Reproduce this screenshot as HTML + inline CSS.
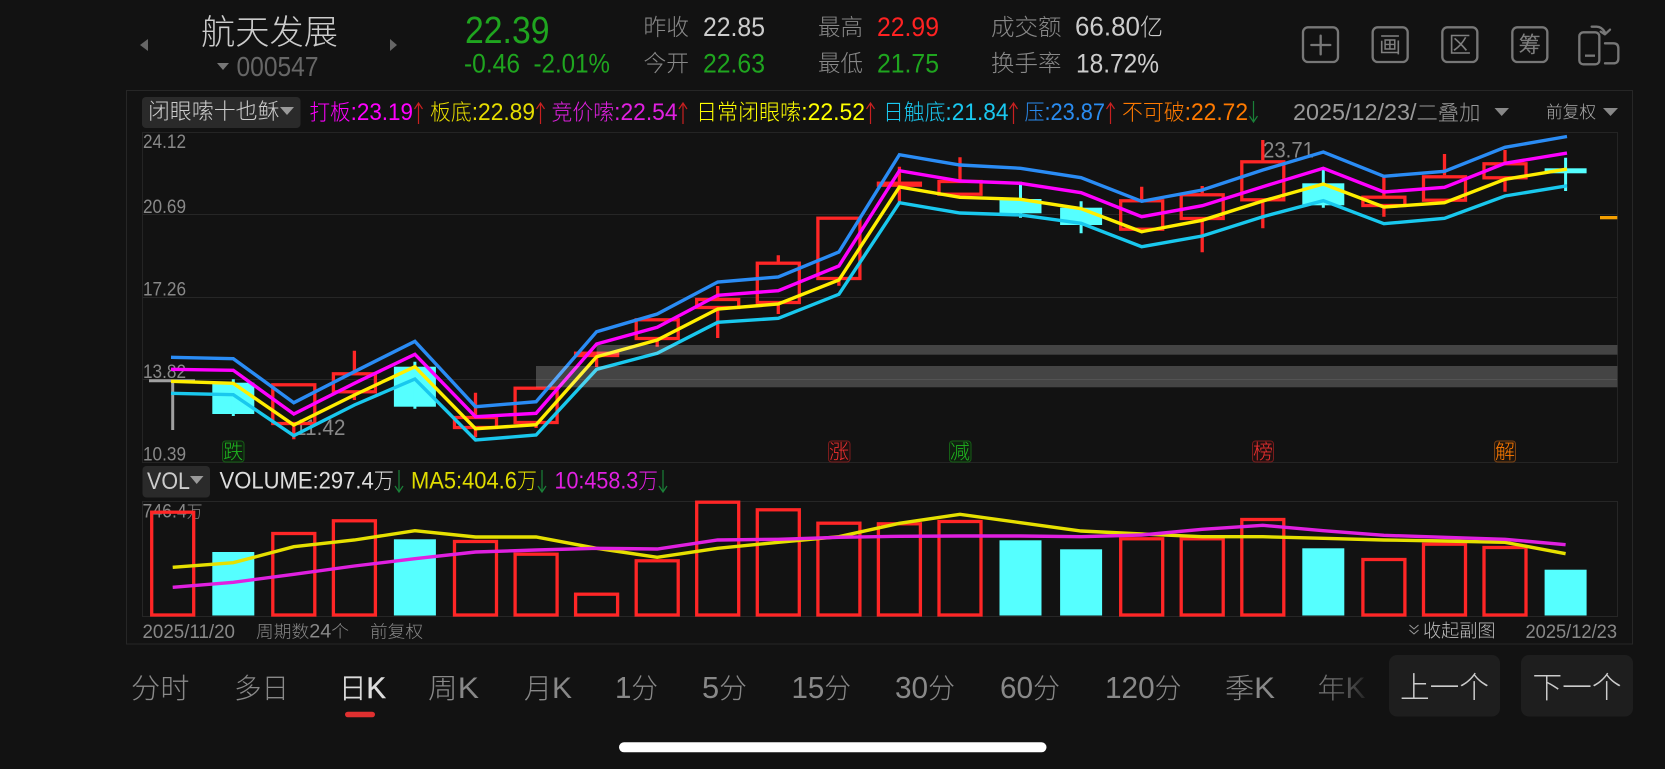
<!DOCTYPE html>
<html lang="zh"><head><meta charset="utf-8"><title>航天发展</title>
<style>
html,body{margin:0;padding:0;background:#121212;width:1665px;height:769px;overflow:hidden}
svg{display:block;position:absolute;left:0;top:0}
text{font-family:"Liberation Sans","Noto Sans CJK SC",sans-serif;font-weight:300;white-space:pre}
.g{fill:#888}.w{fill:#ccc}.gr{fill:#1fa51f}.r{fill:#f22}
.c{fill:none;stroke:#ff2626;stroke-width:3.3}
.wk{fill:none;stroke:#ff2626;stroke-width:3.3}
.wc{fill:none;stroke:#55ffff;stroke-width:3}
.l{fill:none;stroke-width:3.4}
.tab{font-size:28px;fill:#888}
.ic{fill:none;stroke:#777;stroke-width:7}
.icg{font-size:22px;fill:#808080;stroke:#808080;stroke-width:.5;text-anchor:middle}
</style></head><body>
<svg width="1665" height="769" viewBox="0 0 1665 769" xmlns="http://www.w3.org/2000/svg">
<defs><linearGradient id="fd" gradientUnits="userSpaceOnUse" x1="1317" y1="0" x2="1366" y2="0"><stop offset="0" stop-color="#777"/><stop offset=".5" stop-color="#666"/><stop offset="1" stop-color="#222"/></linearGradient></defs>
<rect width="1665" height="769" fill="#121212"/>

<!-- header -->
<polygon points="148,39 148,51 140,45" fill="#666"/>
<polygon points="390,39 390,51 397,45" fill="#666"/>
<text x="201" y="44" font-size="34" fill="#ccc" textLength="137" lengthAdjust="spacingAndGlyphs">航天发展</text>
<polygon points="217,63 229,63 223,70" fill="#777"/>
<text x="236.5" y="76" font-size="27.5" fill="#666" textLength="82" lengthAdjust="spacingAndGlyphs">000547</text>
<text x="465" y="43" font-size="38" class="gr" textLength="84.5" lengthAdjust="spacingAndGlyphs">22.39</text>
<text x="464" y="72.5" font-size="27" class="gr" textLength="56" lengthAdjust="spacingAndGlyphs">-0.46</text>
<text x="533.5" y="72.5" font-size="27" class="gr" textLength="76.5" lengthAdjust="spacingAndGlyphs">-2.01%</text>
<text x="643.5" y="35" font-size="23" class="g" textLength="45.5" lengthAdjust="spacingAndGlyphs">昨收</text>
<text x="643.5" y="71" font-size="23" class="g" textLength="45.5" lengthAdjust="spacingAndGlyphs">今开</text>
<text x="703" y="36" font-size="27" class="w" textLength="62" lengthAdjust="spacingAndGlyphs">22.85</text>
<text x="703" y="72.5" font-size="27" class="gr" textLength="62" lengthAdjust="spacingAndGlyphs">22.63</text>
<text x="818" y="35" font-size="23" class="g" textLength="45" lengthAdjust="spacingAndGlyphs">最高</text>
<text x="818" y="71" font-size="23" class="g" textLength="45" lengthAdjust="spacingAndGlyphs">最低</text>
<text x="877" y="36" font-size="27" class="r" textLength="62" lengthAdjust="spacingAndGlyphs">22.99</text>
<text x="877" y="72.5" font-size="27" class="gr" textLength="62" lengthAdjust="spacingAndGlyphs">21.75</text>
<text x="991" y="35" font-size="23" class="g" textLength="70.5" lengthAdjust="spacingAndGlyphs">成交额</text>
<text x="991" y="71" font-size="23" class="g" textLength="70.5" lengthAdjust="spacingAndGlyphs">换手率</text>
<text x="1075" y="35.5" font-size="27" class="w" textLength="88" lengthAdjust="spacingAndGlyphs">66.80<tspan font-size="24">亿</tspan></text>
<text x="1076" y="72.5" font-size="27" class="w" textLength="83" lengthAdjust="spacingAndGlyphs">18.72%</text>

<!-- icons -->
<g transform="translate(1290,15) scale(.33333)">
<rect class="ic" x="39" y="37" width="105" height="104" rx="15"/>
<path class="ic" d="M64 90H121M92 62V118" stroke-linecap="round" stroke-width="8"/>
<rect class="ic" x="248" y="37" width="105" height="104" rx="15"/>
<rect class="ic" x="457" y="37" width="105" height="104" rx="15"/>
<rect class="ic" x="667" y="37" width="105" height="104" rx="15"/>
<rect class="ic" x="868" y="52" width="60" height="96" rx="12"/>
<path class="ic" d="M885 122H915"/>
<path class="ic" d="M905 35H920Q935 35 945 52M960 44L945 58L932 50" stroke-linejoin="round" stroke-linecap="round"/>
<path class="ic" d="M945 85H970Q985 85 985 100V130Q985 145 970 145H945" stroke-linecap="round"/>
</g>
<text class="icg" x="1390" y="52.5">画</text><text class="icg" x="1459.7" y="52.5">区</text><text class="icg" x="1529.7" y="52.5">筹</text>

<!-- panel -->
<rect x="126.5" y="90.5" width="1506" height="553.5" fill="none" stroke="#262626"/>
<rect x="142.5" y="132.5" width="1475" height="330" fill="none" stroke="#242424"/>
<path d="M142.5 214.5H1617.5M142.5 297.5H1617.5M142.5 379.5H1617.5" stroke="#262626" fill="none"/>
<rect x="142.5" y="501.5" width="1475" height="115" fill="none" stroke="#262626"/>

<!-- legend -->
<rect x="142" y="97" width="158.5" height="31" rx="4" fill="#2a2a2a"/>
<text x="148" y="119" font-size="22" fill="#ccc" textLength="131.5" lengthAdjust="spacingAndGlyphs">闭眼嗦十也稣</text>
<polygon points="280,107 294,107 287,115" fill="#999"/>
<g font-size="22">
<text x="309.5" y="120" fill="#ff00ff" textLength="103.5" lengthAdjust="spacingAndGlyphs">打板<tspan font-size="24">:23.19</tspan></text>
<text x="430" y="120" fill="#e6dc00" textLength="105" lengthAdjust="spacingAndGlyphs">板底<tspan font-size="24">:22.89</tspan></text>
<text x="551.5" y="120" fill="#e020e0" textLength="126" lengthAdjust="spacingAndGlyphs">竞价嗦<tspan font-size="24">:22.54</tspan></text>
<text x="696" y="120" fill="#ffff00" textLength="169" lengthAdjust="spacingAndGlyphs">日常闭眼嗦<tspan font-size="24">:22.52</tspan></text>
<text x="883" y="120" fill="#1ac8f0" textLength="125.5" lengthAdjust="spacingAndGlyphs">日触底<tspan font-size="24">:21.84</tspan></text>
<text x="1024.5" y="120" fill="#2a8cf0" textLength="80.5" lengthAdjust="spacingAndGlyphs">压<tspan font-size="24">:23.87</tspan></text>
<text x="1122" y="120" fill="#ff7a00" textLength="126" lengthAdjust="spacingAndGlyphs">不可破<tspan font-size="24">:22.72</tspan></text>
</g>
<g fill="none" stroke-width="1.2">
<path stroke="#c82020" d="M418.5 124V103M414.5 109L418.5 103L422.5 109M540.5 124V103M536.5 109L540.5 103L544.5 109M683 124V103M679 109L683 103L687 109M870.5 124V103M866.5 109L870.5 103L874.5 109M1013.5 124V103M1009.5 109L1013.5 103L1017.5 109M1110.5 124V103M1106.5 109L1110.5 103L1114.5 109"/>
<path stroke="#1a8038" d="M1253.5 101V122M1249.5 116L1253.5 122L1257.5 116"/>
</g>
<text x="1293" y="120" font-size="21" fill="#999" textLength="187.5" lengthAdjust="spacingAndGlyphs"><tspan font-size="23">2025/12/23/</tspan>二叠加</text>
<polygon points="1494.5,108 1509,108 1501.7,116" fill="#888"/>
<text x="1546" y="118" font-size="17" fill="#aaa" textLength="50" lengthAdjust="spacingAndGlyphs">前复权</text>
<polygon points="1603,108 1618,108 1610.5,116" fill="#888"/>

<!-- axis labels -->
<g font-size="19" class="g">
<text x="143" y="148" textLength="43" lengthAdjust="spacingAndGlyphs">24.12</text>
<text x="143" y="213" textLength="43" lengthAdjust="spacingAndGlyphs">20.69</text>
<text x="143" y="295.5" textLength="43" lengthAdjust="spacingAndGlyphs">17.26</text>
<text x="143" y="378" textLength="43" lengthAdjust="spacingAndGlyphs">13.82</text>
<text x="143" y="460.5" textLength="43" lengthAdjust="spacingAndGlyphs">10.39</text>
</g>
<text x="295" y="435" font-size="22" fill="#888" textLength="50.5" lengthAdjust="spacingAndGlyphs">11.42</text>
<text x="1263" y="157.5" font-size="22" fill="#888" textLength="51" lengthAdjust="spacingAndGlyphs">23.71</text>

<!-- gray T -->
<path d="M149 380.8H195M172.7 380.8V430" stroke="#a0a0a0" stroke-width="3" fill="none"/>

<!-- candles red -->
<g>
<rect class="c" x="272.8" y="384.8" width="42" height="38.7"/>
<rect class="c" x="333.4" y="373.8" width="42" height="18"/>
<rect class="c" x="454.5" y="417.5" width="42" height="10"/>
<rect class="c" x="515.1" y="388.2" width="42" height="34.3"/>
<rect class="c" x="575.6" y="353.2" width="42" height="2.3"/>
<rect class="c" x="636.2" y="319.8" width="42" height="18.7"/>
<rect class="c" x="696.7" y="299.5" width="42" height="8"/>
<rect class="c" x="757.3" y="263.2" width="42" height="39.3"/>
<rect class="c" x="817.9" y="218.2" width="42" height="60.3"/>
<rect class="c" x="878.4" y="183.2" width="42" height="2"/>
<rect class="c" x="939" y="181.5" width="42" height="12.7"/>
<rect class="c" x="1120.7" y="200.8" width="42" height="28.4"/>
<rect class="c" x="1181.2" y="194.8" width="42" height="23.7"/>
<rect class="c" x="1241.8" y="161.8" width="42" height="38"/>
<rect class="c" x="1362.9" y="197.2" width="42" height="8.3"/>
<rect class="c" x="1423.5" y="176.8" width="42" height="23.4"/>
<rect class="c" x="1484" y="163.8" width="42" height="14"/>
<path class="wk" d="M293.8 425V439.3M354.4 350.7V372.3M354.4 393.3V400M475.5 392.7V416M475.5 429V437.3M536.1 424V428M596.6 357V367M657.2 340V346.7M717.7 286V298M717.7 309V338M778.3 255.3V261.7M778.3 304V314M838.9 280V285.7M899.4 166.7V181.7M899.4 186.7V201.7M960 157.3V180M1141.7 186.7V199.3M1202.2 186V193.3M1202.2 220V252.3M1262.8 140V160.3M1262.8 201.3V228.3M1383.9 176.7V195.7M1383.9 207V216.7M1444.5 154V175.3M1505 150V162.3M1505 179.3V191.7"/>
</g>
<!-- candles cyan -->
<g fill="#55ffff">
<rect x="212.3" y="382.7" width="42" height="31.3"/>
<rect x="393.9" y="366.7" width="42" height="40"/>
<rect x="999.5" y="199" width="42" height="14.3"/>
<rect x="1060.1" y="207.7" width="42" height="17.3"/>
<rect x="1302.3" y="183.3" width="42" height="22"/>
<rect x="1544.6" y="168.3" width="42" height="5"/>
</g>
<path class="wc" d="M233.3 379.3V416M414.9 361.7V408.7M1020.5 181.7V217.7M1081.1 201.3V233.3M1323.3 170V207.7M1565.6 157.7V191"/>

<!-- main lines -->
<polyline class="l" stroke="#2a8cf5" points="171,357.3 233.3,358.7 293.8,402.7 354.4,371.7 414.9,341.3 475.5,406.7 536.1,401.7 596.6,331.7 657.2,314 717.7,282 778.3,277 838.9,252 899.4,154.7 960,165 1020.5,168.3 1081.1,177.7 1141.7,201.3 1202.2,190 1262.8,170 1323.3,152 1383.9,176.3 1444.5,171.3 1505,147.3 1567,136.5"/>
<polyline class="l" stroke="#ff00ff" points="171,369.3 233.3,370.3 293.8,414 354.4,383.3 414.9,354.3 475.5,416.7 536.1,413.3 596.6,344 657.2,327.3 717.7,295.3 778.3,290.7 838.9,266 899.4,170.7 960,181 1020.5,183.3 1081.1,192.7 1141.7,216.7 1202.2,205.7 1262.8,186.7 1323.3,168.3 1383.9,192 1444.5,187.3 1505,163.3 1567,153.1"/>
<polyline class="l" stroke="#19c8ee" points="171,393.3 233.3,394.7 293.8,435.7 354.4,405 414.9,379 475.5,440 536.1,435 596.6,369.3 657.2,353.3 717.7,322.3 778.3,318.3 838.9,294.3 899.4,202.7 960,213 1020.5,215 1081.1,223.3 1141.7,246.7 1202.2,236 1262.8,216.7 1323.3,200.7 1383.9,223.7 1444.5,218.3 1505,196 1567,185.8"/>
<polyline class="l" stroke="#ffee00" points="171,381.3 233.3,383.3 293.8,425 354.4,395 414.9,366.7 475.5,428.7 536.1,424.7 596.6,356.7 657.2,340 717.7,309 778.3,304 838.9,280 899.4,187 960,197.3 1020.5,199.3 1081.1,208.7 1141.7,231.7 1202.2,220.3 1262.8,201 1323.3,184 1383.9,207 1444.5,202.7 1505,179.3 1567,169.1"/>

<!-- gray bands -->
<rect x="596.6" y="345" width="1020.7" height="9.7" fill="#fff" fill-opacity=".21"/>
<rect x="536" y="366" width="1081.3" height="21.3" fill="#fff" fill-opacity=".21"/>
<!-- orange dash -->
<rect x="1600" y="216" width="17.3" height="3.3" fill="#f5a000"/>

<!-- signal tags -->
<g font-size="20" text-anchor="middle">
<rect x="222.5" y="441" width="21.5" height="21" rx="3" fill="#0e2a0e" fill-opacity=".5" stroke="#155f15"/><text x="233.3" y="458.5" fill="#1fb51f">跌</text>
<rect x="828.5" y="441" width="21.5" height="21" rx="3" fill="#2a0e0e" fill-opacity=".5" stroke="#7a1c1c"/><text x="839" y="458.5" fill="#f03030">涨</text>
<rect x="949.5" y="441" width="21.5" height="21" rx="3" fill="#0e2a0e" fill-opacity=".5" stroke="#155f15"/><text x="960" y="458.5" fill="#1fb51f">减</text>
<rect x="1252.5" y="441" width="21" height="21" rx="3" fill="#2a0e0e" fill-opacity=".5" stroke="#7a1c1c"/><text x="1263" y="458.5" fill="#f03030">榜</text>
<rect x="1494.5" y="441" width="21" height="21" rx="3" fill="#2a180a" fill-opacity=".5" stroke="#7a4212"/><text x="1505" y="458.5" fill="#ff7a00">解</text>
</g>

<!-- VOL legend -->
<rect x="142.5" y="466" width="67.5" height="31.5" rx="4" fill="#2a2a2a"/>
<text x="147" y="489" font-size="24" fill="#ccc" textLength="43" lengthAdjust="spacingAndGlyphs">VOL</text>
<polygon points="190,476 203.5,476 196.7,484" fill="#999"/>
<g font-size="24">
<text x="219.5" y="488.5" fill="#ddd" textLength="174.5" lengthAdjust="spacingAndGlyphs">VOLUME:297.4<tspan font-size="22">万</tspan></text>
<text x="411" y="488.5" fill="#e0dc00" textLength="126" lengthAdjust="spacingAndGlyphs">MA5:404.6<tspan font-size="22">万</tspan></text>
<text x="554.5" y="488.5" fill="#e020e0" textLength="103.5" lengthAdjust="spacingAndGlyphs">10:458.3<tspan font-size="22">万</tspan></text>
</g>
<path d="M399 470V492M395 486L399 492L403 486M542 470V492M538 486L542 492L546 486M663 470V492M659 486L663 492L667 486" stroke="#1a8038" stroke-width="1.2" fill="none"/>
<text x="142.5" y="517.5" font-size="19" fill="#888" textLength="60" lengthAdjust="spacingAndGlyphs">746.4<tspan font-size="17">万</tspan></text>

<!-- volume bars -->
<g>
<rect class="c" x="151.7" y="512.2" width="42" height="102.8"/>
<rect class="c" x="272.8" y="533.5" width="42" height="81.5"/>
<rect class="c" x="333.4" y="520.8" width="42" height="94.2"/>
<rect class="c" x="454.5" y="541.5" width="42" height="73.5"/>
<rect class="c" x="515.1" y="554.2" width="42" height="60.8"/>
<rect class="c" x="575.6" y="594.2" width="42" height="20.8"/>
<rect class="c" x="636.2" y="560.8" width="42" height="54.2"/>
<rect class="c" x="696.7" y="502.2" width="42" height="112.8"/>
<rect class="c" x="757.3" y="509.8" width="42" height="105.2"/>
<rect class="c" x="817.9" y="523.2" width="42" height="91.8"/>
<rect class="c" x="878.4" y="523.8" width="42" height="91.2"/>
<rect class="c" x="939" y="521.5" width="42" height="93.5"/>
<rect class="c" x="1120.7" y="538.8" width="42" height="76.2"/>
<rect class="c" x="1181.2" y="538.8" width="42" height="76.2"/>
<rect class="c" x="1241.8" y="519.5" width="42" height="95.5"/>
<rect class="c" x="1362.9" y="559.5" width="42" height="55.5"/>
<rect class="c" x="1423.5" y="544.2" width="42" height="70.8"/>
<rect class="c" x="1484" y="547.5" width="42" height="67.5"/>
</g>
<g fill="#55ffff">
<rect x="212.3" y="552" width="42" height="63.5"/>
<rect x="393.9" y="539.3" width="42" height="76.2"/>
<rect x="999.5" y="540.3" width="42" height="75.2"/>
<rect x="1060.1" y="549.3" width="42" height="66.2"/>
<rect x="1302.3" y="548.3" width="42" height="67.2"/>
<rect x="1544.6" y="569.7" width="42" height="45.8"/>
</g>
<polyline class="l" stroke="#e6e000" points="172.7,567.3 233.3,562.7 293.8,546.7 354.4,540 414.9,530.7 475.5,537 536.1,537 596.6,548.3 657.2,557.3 717.7,548.3 778.3,542.3 838.9,536.7 899.4,523.3 960,514.3 1020.5,522.7 1081.1,531 1141.7,534 1202.2,536.7 1262.8,536.7 1323.3,538.3 1383.9,540 1444.5,541 1505,542.3 1565.6,553.7"/>
<polyline class="l" stroke="#e020e0" points="172.7,587.3 233.3,582.3 293.8,574.3 354.4,566 414.9,558.7 475.5,552 536.1,550 596.6,548.3 657.2,549 717.7,540 778.3,539.3 838.9,537.3 899.4,536.3 960,536 1020.5,536 1081.1,536.7 1141.7,535 1202.2,529.3 1262.8,525.3 1323.3,530.7 1383.9,535.3 1444.5,537.3 1505,539.3 1565.6,544.7"/>

<!-- bottom labels -->
<g font-size="17" class="g">
<text x="142.5" y="638" font-size="19" textLength="92.5" lengthAdjust="spacingAndGlyphs">2025/11/20</text>
<text x="256" y="637.5" textLength="93" lengthAdjust="spacingAndGlyphs">周期数<tspan font-size="19">24</tspan>个</text>
<text x="370" y="637.5" textLength="53" lengthAdjust="spacingAndGlyphs">前复权</text>
<text x="1525.5" y="638" font-size="19" textLength="91.5" lengthAdjust="spacingAndGlyphs">2025/12/23</text>
</g>
<path d="M1409.5 625L1414 629L1418.5 625M1409.5 630L1414 634L1418.5 630" stroke="#999" fill="none" stroke-width="1"/>
<text x="1423" y="637" font-size="18" fill="#bbb" textLength="72.5" lengthAdjust="spacingAndGlyphs">收起副图</text>

<!-- tabs -->
<g>
<text class="tab" x="131" y="698" textLength="58.5" lengthAdjust="spacingAndGlyphs">分时</text>
<text class="tab" x="234" y="698" textLength="55" lengthAdjust="spacingAndGlyphs">多日</text>
<text class="tab" x="339" y="698" textLength="47" lengthAdjust="spacingAndGlyphs" style="fill:#ddd;stroke:#ddd;stroke-width:.4">日<tspan font-size="30">K</tspan></text>
<text class="tab" x="428" y="698" textLength="51" lengthAdjust="spacingAndGlyphs">周<tspan font-size="30">K</tspan></text>
<text class="tab" x="524" y="698" textLength="48" lengthAdjust="spacingAndGlyphs">月<tspan font-size="30">K</tspan></text>
<text class="tab" x="615" y="698" textLength="43" lengthAdjust="spacingAndGlyphs"><tspan font-size="31">1</tspan>分</text>
<text class="tab" x="702" y="698" textLength="45" lengthAdjust="spacingAndGlyphs"><tspan font-size="31">5</tspan>分</text>
<text class="tab" x="791.5" y="698" textLength="59.5" lengthAdjust="spacingAndGlyphs"><tspan font-size="31">15</tspan>分</text>
<text class="tab" x="895" y="698" textLength="60" lengthAdjust="spacingAndGlyphs"><tspan font-size="31">30</tspan>分</text>
<text class="tab" x="1000" y="698" textLength="60" lengthAdjust="spacingAndGlyphs"><tspan font-size="31">60</tspan>分</text>
<text class="tab" x="1105" y="698" textLength="76.5" lengthAdjust="spacingAndGlyphs"><tspan font-size="31">120</tspan>分</text>
<text class="tab" x="1225" y="698" textLength="50" lengthAdjust="spacingAndGlyphs">季<tspan font-size="30">K</tspan></text>
<text x="1317.5" y="698" font-size="28" textLength="48" lengthAdjust="spacingAndGlyphs" fill="url(#fd)">年<tspan font-size="30">K</tspan></text>
</g>
<rect x="345" y="711.7" width="30" height="5.6" rx="2.8" fill="#e03030"/>
<rect x="1389" y="655" width="111" height="61.5" rx="8" fill="#1e1e1e"/>
<rect x="1521" y="655" width="112" height="61.5" rx="8" fill="#1e1e1e"/>
<text x="1400" y="698" font-size="30" fill="#ccc" textLength="89" lengthAdjust="spacingAndGlyphs">上一个</text>
<text x="1532.5" y="698" font-size="30" fill="#ccc" textLength="89" lengthAdjust="spacingAndGlyphs">下一个</text>
<rect x="619" y="742.3" width="427.5" height="10" rx="5" fill="#fff"/>
</svg>
</body></html>
